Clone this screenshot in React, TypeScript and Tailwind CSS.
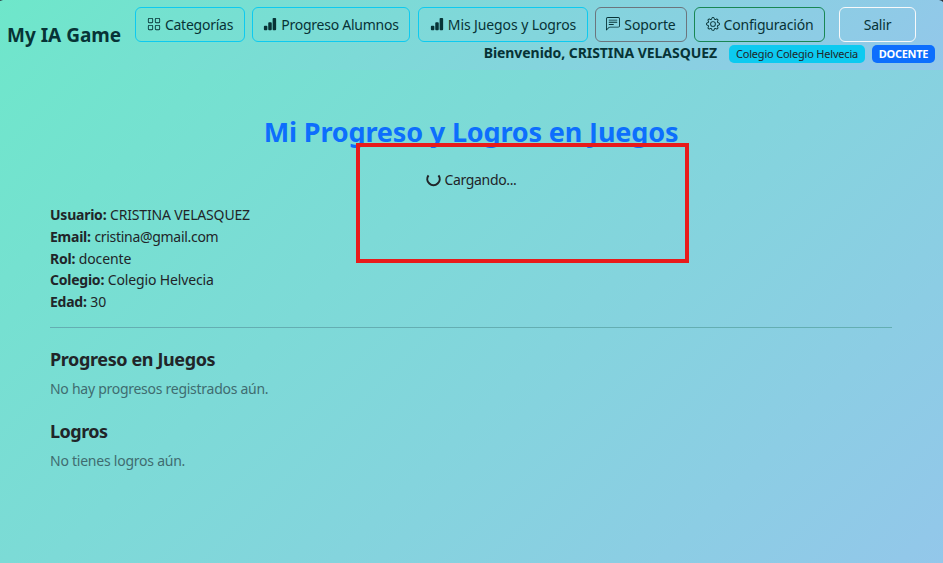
import React from 'react';
import { BsGrid, BsBarChartFill, BsChatLeftText, BsGear } from 'react-icons/bs';

const btn = 'flex h-[35px] shrink-0 items-center justify-center rounded-[6px] border text-[14px] whitespace-nowrap';

const profile = [
  ['Usuario', 'CRISTINA VELASQUEZ', 'tracking-[-0.16px]'],
  ['Email', 'cristina@gmail.com', 'tracking-[-0.3px]'],
  ['Rol', 'docente', 'tracking-[-0.1px]'],
  ['Colegio', 'Colegio Helvecia', 'tracking-[-0.14px]'],
  ['Edad', '30', ''],
];

export default function App() {
  return (
    <div className="relative h-[563px] w-[943px] overflow-hidden bg-[linear-gradient(135deg,#6ee7ca_0%,#93c7ea_100%)] font-['Noto_Sans',sans-serif] text-[14px] text-[#212529]">
      <header className="flex h-[70px] bg-[linear-gradient(135deg,#6ee7ca_0%,#93c7ea_100%)] pl-[7px] pt-[7px] text-[#073336]">
        <div className="mt-[14px] w-[128px] shrink-0 text-[19px] leading-[28px] font-bold">My IA Game</div>
        <div className="w-[800px]">
          <nav className="flex">
            <div className={btn + ' w-[110px] border-[#0dcaf0]'}><BsGrid className="mr-1 -mt-[2px]" /><span className="tracking-[-0.25px]">Categorías</span></div>
            <div className={btn + ' ml-[7px] w-[158px] border-[#0dcaf0]'}><BsBarChartFill className="mr-1 -mt-[2px]" /><span className="tracking-[-0.25px]">Progreso Alumnos</span></div>
            <div className={btn + ' ml-[8px] w-[170px] border-[#0dcaf0]'}><BsBarChartFill className="mr-1 -mt-[2px]" /><span className="tracking-[-0.1px]">Mis Juegos y Logros</span></div>
            <div className={btn + ' ml-[7px] w-[92px] border-[#6c757d]'}><BsChatLeftText className="mr-1 -mt-[2px]" /><span className="tracking-[-0.1px]">Soporte</span></div>
            <div className={btn + ' ml-[7px] w-[131px] border-[#198754]'}><BsGear className="mr-1 -mt-[2px]" /><span className="tracking-[-0.2px]">Configuración</span></div>
            <div className={btn + ' ml-[14px] w-[77px] border-[#f8f9fa] tracking-[-0.2px]'}>Salir</div>
          </nav>
          <div className="mt-[2px] flex h-[20px] items-center justify-end">
            <b className="-mt-[3px] tracking-[-0.06px]">Bienvenido, CRISTINA VELASQUEZ</b>
            <span className="ml-3 flex h-[18px] w-[136px] items-center justify-center rounded-[5px] bg-[#0dcaf0] text-[11px] tracking-[-0.2px] text-[#212529]">Colegio Colegio Helvecia</span>
            <span className="ml-[7px] flex h-[18px] w-[63px] items-center justify-center rounded-[5px] bg-[#0d6efd] text-[11px] font-bold tracking-[-0.3px] text-white">DOCENTE</span>
          </div>
        </div>
      </header>
      <main className="pr-[51px] pl-[50px] pt-[44px]">
        <h1 className="text-center text-[27px] leading-[36px] font-bold tracking-[-0.15px] text-[#0d6efd]">Mi Progreso y Logros en Juegos</h1>
        <div className="mt-[18px] flex h-[22px] items-center justify-center gap-1">
          <svg className="mt-px" width="15" height="15" viewBox="0 0 15 15" fill="none" stroke="currentColor" strokeWidth="2.1">
            <path d="M2.5 3.3A6.2 6.2 0 1 0 12.5 3.3" />
          </svg>
          <span className="tracking-[-0.35px]">Cargando...</span>
        </div>
        <div className="mt-[14px]">
          {profile.map(([label, value, tracking]) => (
            <p key={label} className="h-[21.75px] leading-[22px]"><b className="tracking-[-0.24px]">{label}:</b> <span className={tracking}>{value}</span></p>
          ))}
        </div>
        <hr className="mt-[14px] border-[#64aeb2]" />
        <h2 className="mt-[19px] text-[18px] leading-[24px] font-bold tracking-[-0.38px]">Progreso en Juegos</h2>
        <p className="mt-[7px] leading-[22px] tracking-[-0.27px] text-[#3f6c70]">No hay progresos registrados aún.</p>
        <h2 className="mt-[19px] text-[18px] leading-[24px] font-bold tracking-[-0.5px]">Logros</h2>
        <p className="mt-[7px] leading-[22px] tracking-[-0.24px] text-[#3f6c70]">No tienes logros aún.</p>
      </main>
      <div className="absolute left-[356px] top-[143px] h-[120px] w-[333px] border-4 border-[#e81b1b]" />
      <svg className="absolute left-0 top-0" width="3" height="1" viewBox="0 0 3 1"><path d="M0 0h3L0 1z" fill="#2a3b40" /></svg>
      <svg className="absolute right-0 top-0" width="4" height="2" viewBox="0 0 4 2"><path d="M0 0h4v2Q3 .5 0 0z" fill="#2a2f38" /></svg>
    </div>
  );
}
